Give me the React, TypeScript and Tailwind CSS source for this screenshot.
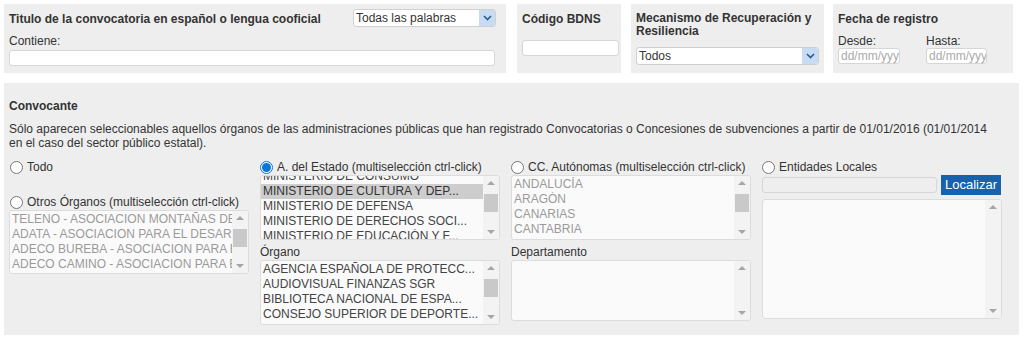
import React from 'react';

type ListBoxProps = {
  items: string[];
  width: string;
  height: string;
  selected?: number;
  muted?: boolean;
  shift?: string;
  thumb?: string;
};

const Arrow = ({ up }: { up?: boolean }) => (
  <div className="h-[14px] flex items-center justify-center">
    {up ? (
      <div className="w-0 h-0 border-x-[4px] border-x-transparent border-b-[4px] border-b-[#a6a6a6]" />
    ) : (
      <div className="w-0 h-0 border-x-[4px] border-x-transparent border-t-[4px] border-t-[#a6a6a6]" />
    )}
  </div>
);

// fake scrollbar: arrows + optional thumb
const ScrollBar = ({ thumb }: { thumb?: string }) => (
  <div className="w-[16px] shrink-0 flex flex-col bg-[#f3f3f3]">
    <Arrow up />
    <div className="flex-1 px-[1px]">
      {thumb && <div className={`${thumb} w-full bg-[#c9c9c9]`} />}
    </div>
    <Arrow />
  </div>
);

const ListBox = ({ items, width, height, selected, muted, shift, thumb }: ListBoxProps) => (
  <div className={`${width} ${height} flex rounded-[3px] border border-[#dcdcdc] bg-[#fafafa] overflow-hidden`}>
    <div className="flex-1 overflow-hidden pt-[1px]">
      <div className={shift}>
        {items.map((it, i) => (
          <div
            key={i}
            className={`h-[15px] leading-[15px] pl-[2px] whitespace-nowrap overflow-hidden text-[12px] ${
              i === selected ? 'bg-[#cdcdcd] text-[#333]' : muted ? 'text-[#9a9a9a]' : 'text-[#444]'
            }`}
          >
            {it}
          </div>
        ))}
      </div>
    </div>
    <ScrollBar thumb={thumb} />
  </div>
);

const Radio = ({ checked, label }: { checked?: boolean; label: string }) => (
  <label className="flex items-center gap-[4px] text-[12px] text-[#333] leading-[15px] whitespace-nowrap">
    {checked ? (
      <span className="w-[13px] h-[13px] rounded-full border border-[#0b74da] bg-white flex items-center justify-center">
        <span className="w-[9px] h-[9px] rounded-full bg-[#0b74da]" />
      </span>
    ) : (
      <span className="w-[13px] h-[13px] rounded-full border border-[#767676] bg-white" />
    )}
    <span>{label}</span>
  </label>
);

const Select = ({ width, value }: { width: string; value: string }) => (
  <div className={`${width} h-[18px] flex items-center rounded-[3px] border border-[#d0d0d0] bg-white overflow-hidden`}>
    <span className="flex-1 pl-[2px] text-[12px] text-[#333] leading-[16px]">{value}</span>
    <span className="w-[16px] h-full bg-[#c7dbf3] flex items-center justify-center">
      <svg width="9" height="6" viewBox="0 0 9 6">
        <path d="M1 1 L4.5 4.5 L8 1" fill="none" stroke="#2c5a94" strokeWidth="1.6" />
      </svg>
    </span>
  </div>
);

const TextBox = ({ width, placeholder }: { width: string; placeholder?: string }) => (
  <div className={`${width} h-[16px] rounded-[3px] border border-[#d6d6d6] bg-white overflow-hidden whitespace-nowrap text-[12px] leading-[14px] pl-[2px] text-[#aaa]`}>
    {placeholder}
  </div>
);

const ministerios = [
  'MINISTERIO DE CONSUMO',
  'MINISTERIO DE CULTURA Y DEP...',
  'MINISTERIO DE DEFENSA',
  'MINISTERIO DE DERECHOS SOCI...',
  'MINISTERIO DE EDUCACIÓN Y F...',
];

const organos = [
  'AGENCIA ESPAÑOLA DE PROTECC...',
  'AUDIOVISUAL FINANZAS SGR',
  'BIBLIOTECA NACIONAL DE ESPA...',
  'CONSEJO SUPERIOR DE DEPORTE...',
  'CONSORCIO',
];

const otros = [
  'TELENO - ASOCIACION MONTAÑAS DEL TELENO',
  'ADATA - ASOCIACION PARA EL DESARROLLO',
  'ADECO BUREBA - ASOCIACION PARA EL DESARROLLO',
  'ADECO CAMINO - ASOCIACION PARA EL DESARROLLO',
];

const autonomas = ['ANDALUCÍA', 'ARAGÓN', 'CANARIAS', 'CANTABRIA', 'CASTILLA'];

export default function App() {
  return (
    <div className="w-[1024px] h-[337px] bg-white pt-[4px] pl-[4px] font-['Liberation_Sans',Arial,sans-serif] text-[#333]">
      {/* Top filters */}
      <div className="flex">
        <div className="w-[502px] h-[69px] bg-[#eeeeee] pl-[5px] pt-[5px]">
          <div className="flex items-start justify-between pr-[10px]">
            <span className="mt-[3px] text-[12px] font-bold leading-[14px]">
              Titulo de la convocatoria en español o lengua cooficial
            </span>
            <Select width="w-[143px]" value="Todas las palabras" />
          </div>
          <div className="mt-[7px] text-[12px] leading-[15px]">Contiene:</div>
          <div className="mt-[1px]">
            <TextBox width="w-[486px]" />
          </div>
        </div>

        <div className="ml-[11px] w-[104px] h-[69px] bg-[#eeeeee] pl-[5px] pt-[8px]">
          <div className="text-[12px] font-bold leading-[14px]">Código BDNS</div>
          <div className="mt-[14px]">
            <TextBox width="w-[97px]" />
          </div>
        </div>

        <div className="ml-[10px] w-[193px] h-[69px] bg-[#eeeeee] pl-[5px] pt-[8px]">
          <div className="text-[12px] font-bold leading-[13px]">
            Mecanismo de Recuperación y
            <br />
            Resiliencia
          </div>
          <div className="mt-[9px]">
            <Select width="w-[183px]" value="Todos" />
          </div>
        </div>

        <div className="ml-[9px] w-[180px] h-[69px] bg-[#eeeeee] pl-[5px] pt-[8px]">
          <div className="text-[12px] font-bold leading-[14px]">Fecha de registro</div>
          <div className="mt-[9px] flex gap-[26px]">
            <div>
              <div className="text-[12px] leading-[13px]">Desde:</div>
              <TextBox width="w-[62px]" placeholder="dd/mm/yyyy" />
            </div>
            <div>
              <div className="text-[12px] leading-[13px]">Hasta:</div>
              <TextBox width="w-[61px]" placeholder="dd/mm/yyyy" />
            </div>
          </div>
        </div>
      </div>

      {/* Convocante */}
      <div className="mt-[10px] w-[1015px] h-[252px] bg-[#eeeeee] pl-[5px] pt-[16px]">
        <div className="text-[12px] font-bold leading-[14px]">Convocante</div>
        <p className="mt-[9px] text-[12px] leading-[14px] pr-[22px]">
          Sólo aparecen seleccionables aquellos órganos de las administraciones públicas que han registrado Convocatorias o
          Concesiones de subvenciones a partir de 01/01/2016 (01/01/2014 en el caso del sector público estatal).
        </p>

        <div className="mt-[10px] flex gap-[11px]">
          {/* Column 1 */}
          <div className="w-[240px]">
            <div className="pl-[1px]">
              <Radio label="Todo" />
            </div>
            <div className="mt-[20px] pl-[1px]">
              <Radio label="Otros Órganos (multiselección ctrl-click)" />
            </div>
            <ListBox items={otros} width="w-[240px]" height="h-[64px]" muted thumb="mt-[4px] h-[18px]" />
          </div>

          {/* Column 2 */}
          <div className="w-[240px]">
            <Radio checked label="A. del Estado (multiselección ctrl-click)" />
            <ListBox
              items={ministerios}
              width="w-[240px]"
              height="h-[65px]"
              selected={1}
              shift="-mt-[8px]"
              thumb="mt-[4px] h-[18px]"
            />
            <div className="mt-[5px] text-[12px] leading-[15px]">Órgano</div>
            <ListBox items={organos} width="w-[240px]" height="h-[65px]" thumb="mt-[4px] h-[18px]" />
          </div>

          {/* Column 3 */}
          <div className="w-[240px]">
            <Radio label="CC. Autónomas (multiselección ctrl-click)" />
            <ListBox items={autonomas} width="w-[240px]" height="h-[65px]" muted thumb="mt-[4px] h-[18px]" />
            <div className="mt-[5px] text-[12px] leading-[15px]">Departamento</div>
            <ListBox items={[]} width="w-[240px]" height="h-[61px]" />
          </div>

          {/* Column 4 */}
          <div className="w-[240px]">
            <Radio label="Entidades Locales" />
            <div className="flex items-center gap-[4px]">
              <div className="w-[175px] h-[16px] rounded-[3px] border border-[#d6d6d6] bg-[#eeeeee]" />
              <button className="w-[60px] h-[20px] bg-[#1762ad] text-white text-[13px] leading-[20px]">Localizar</button>
            </div>
            <div className="mt-[4px]">
              <ListBox items={[]} width="w-[240px]" height="h-[120px]" />
            </div>
          </div>
        </div>
      </div>
    </div>
  );
}
